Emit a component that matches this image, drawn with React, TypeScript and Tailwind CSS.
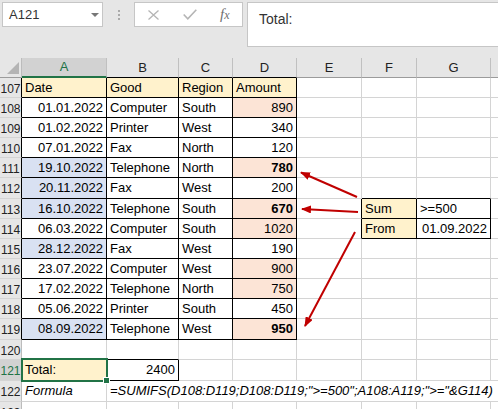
import clsx from 'clsx';

type C = {
  t?: string;
  bg?: string;
  r?: boolean;
  bold?: boolean;
  it?: boolean;
  rb?: boolean;
  bb?: boolean;
  nr?: boolean;
  span?: string;
};

const Y = 'bg-[#fff2cc]';
const O = 'bg-[#fce4d6]';
const BL = 'bg-[#d9e1f2]';

const FORMULA = '=SUMIFS(D108:D119;D108:D119;">=500";A108:A119;">="&G114)';

function dataRow(
  date: string,
  good: string,
  region: string,
  amt: string,
  blue: boolean,
  orange: boolean,
  bold: boolean,
  extra: C[] = [{}, {}, {}, { nr: true }]
): C[] {
  return [
    { t: date, r: true, bg: blue ? BL : undefined, rb: true, bb: true },
    { t: good, rb: true, bb: true },
    { t: region, rb: true, bb: true },
    { t: amt, r: true, bg: orange ? O : undefined, bold, rb: true, bb: true },
    ...extra,
  ];
}

const empty = (): C[] => [{}, {}, {}, {}, {}, {}, {}, { nr: true }];

const rows: { n: number; black?: boolean; sel?: boolean; cells: C[] }[] = [
  {
    n: 107,
    black: true,
    cells: [
      { t: 'Date', bg: Y, rb: true, bb: true },
      { t: 'Good', bg: Y, rb: true, bb: true },
      { t: 'Region', bg: Y, rb: true, bb: true },
      { t: 'Amount', bg: Y, rb: true, bb: true },
      {}, {}, {}, { nr: true },
    ],
  },
  { n: 108, black: true, cells: dataRow('01.01.2022', 'Computer', 'South', '890', false, true, false) },
  { n: 109, black: true, cells: dataRow('01.02.2022', 'Printer', 'West', '340', false, false, false) },
  { n: 110, black: true, cells: dataRow('07.01.2022', 'Fax', 'North', '120', false, false, false) },
  { n: 111, black: true, cells: dataRow('19.10.2022', 'Telephone', 'North', '780', true, true, true) },
  { n: 112, black: true, cells: dataRow('20.11.2022', 'Fax', 'West', '200', true, false, false, [{}, { bb: true }, { bb: true }, { nr: true }]) },
  {
    n: 113,
    black: true,
    cells: dataRow('16.10.2022', 'Telephone', 'South', '670', true, true, true, [
      { rb: true },
      { t: 'Sum', bg: Y, rb: true, bb: true },
      { t: '>=500', rb: true, bb: true },
      { nr: true },
    ]),
  },
  {
    n: 114,
    black: true,
    cells: dataRow('06.03.2022', 'Computer', 'South', '1020', false, true, false, [
      { rb: true },
      { t: 'From', bg: Y, rb: true, bb: true },
      { t: '01.09.2022', r: true, rb: true, bb: true },
      { nr: true },
    ]),
  },
  { n: 115, black: true, cells: dataRow('28.12.2022', 'Fax', 'West', '190', true, false, false) },
  { n: 116, black: true, cells: dataRow('23.07.2022', 'Computer', 'West', '900', false, true, false) },
  { n: 117, black: true, cells: dataRow('17.02.2022', 'Telephone', 'North', '750', false, true, false) },
  { n: 118, black: true, cells: dataRow('05.06.2022', 'Printer', 'South', '450', false, false, false) },
  { n: 119, black: true, cells: dataRow('08.09.2022', 'Telephone', 'West', '950', true, true, true) },
  { n: 120, cells: [{ bb: true }, { bb: true }, {}, {}, {}, {}, {}, { nr: true }] },
  {
    n: 121,
    sel: true,
    cells: [
      { t: 'Total:', bg: Y, rb: true, bb: true },
      { t: '2400', r: true, rb: true, bb: true },
      {}, {}, {}, {}, {}, { nr: true },
    ],
  },
  {
    n: 122,
    cells: [
      { t: 'Formula', it: true },
      { t: FORMULA, it: true, nr: true, span: 'col-span-7 text-[12.75px]' },
    ],
  },
  { n: 123, cells: empty() },
];

function Cell({ c }: { c: C }) {
  return (
    <div
      className={clsx(
        'flex items-center overflow-hidden whitespace-nowrap border-b px-[3px] text-[13px] text-black',
        c.nr ? 'border-r-0' : 'border-r',
        c.rb ? 'border-r-black' : 'border-r-[#d4d4d4]',
        c.bb ? 'border-b-black' : 'border-b-[#d4d4d4]',
        c.r ? 'justify-end' : 'justify-start',
        c.bg ?? 'bg-white',
        c.bold && 'font-bold',
        c.it && 'italic',
        c.span
      )}
    >
      {c.t}
    </div>
  );
}

function RowHead({ n, black, sel }: { n: number; black?: boolean; sel?: boolean }) {
  return (
    <div
      className={clsx(
        'flex items-start justify-center border-r border-b border-b-[#d4d4d4] pt-[2px] text-[12px]',
        black ? 'border-r-black' : 'border-r-[#bcbcbc]',
        sel ? 'bg-[#d2d2d2] text-[#217346]' : 'bg-[#e6e6e6] text-[#222]'
      )}
    >
      {n}
    </div>
  );
}

const letters = ['A', 'B', 'C', 'D', 'E', 'F', 'G'];

function Toolbar() {
  return (
    <div className="flex h-[58px] items-start bg-[#e6e6e6] pl-[2px] pt-[2px]">
      <div className="relative flex h-[25px] w-[101px] items-center border border-[#c6c6c6] bg-white pl-[6px] text-[13px] text-[#333]">
        A121
        <svg className="absolute left-[88px] top-[10px]" width="8" height="5" viewBox="0 0 8 5">
          <path d="M0 0 L8 0 L4 4 Z" fill="#777" />
        </svg>
      </div>
      <div className="flex h-[25px] w-[31px] flex-col items-center justify-center gap-[2px]">
        <span className="h-[2px] w-[2px] bg-[#aaa]" />
        <span className="h-[2px] w-[2px] bg-[#aaa]" />
        <span className="h-[2px] w-[2px] bg-[#aaa]" />
      </div>
      <div className="flex h-[25px] w-[109px] items-center border border-[#c6c6c6] bg-white">
        <svg className="ml-[13px]" width="11" height="10" viewBox="0 0 11 10">
          <path d="M0.5 0.5 L10.5 9.5 M10.5 0.5 L0.5 9.5" stroke="#b5b5b5" strokeWidth="1.3" fill="none" />
        </svg>
        <svg className="ml-[24px]" width="14" height="11" viewBox="0 0 14 11">
          <path d="M0.7 5.5 L4.8 9.8 L13.3 0.8" stroke="#b5b5b5" strokeWidth="1.6" fill="none" />
        </svg>
        <span className="ml-[23px] font-['Liberation_Serif',serif] text-[15px] italic leading-none text-[#707070]">
          f<span className="text-[12px]">x</span>
        </span>
      </div>
      <div className="ml-[4px] h-[45px] flex-1 border border-r-0 border-[#c6c6c6] bg-white pl-[11px] pt-[6px] text-[14px] text-[#333]">
        Total:
      </div>
    </div>
  );
}

export default function App() {
  return (
    <div className="relative h-[409px] w-[498px] overflow-hidden bg-white font-['Liberation_Sans',Arial,sans-serif]">
      <Toolbar />
      <div className="grid grid-cols-[22px_85px_72px_54px_64px_65px_55px_74px_1fr] grid-rows-[20px_20px_20px_20px_20px_20px_21px_20px_20px_20px_20px_20px_20px_21px_20px_21px_21px_20px]">
        <div className="relative border-r border-b border-r-[#bcbcbc] border-b-[#9b9b9b] bg-[#e6e6e6]">
          <svg className="absolute right-[2px] bottom-[3px]" width="12" height="12" viewBox="0 0 12 12">
            <path d="M12 0 L12 12 L0 12 Z" fill="#b4b4b4" />
          </svg>
        </div>
        {letters.map((l, i) => (
          <div
            key={l}
            className={clsx(
              'flex items-center justify-center border-r border-r-[#c0c0c0] text-[13px]',
              i === 0
                ? 'border-b-2 border-b-[#217346] bg-[#d2d2d2] text-[#217346]'
                : i < 4
                  ? 'border-b border-b-black bg-[#e6e6e6] text-[#222]'
                  : 'border-b border-b-[#9b9b9b] bg-[#e6e6e6] text-[#222]'
            )}
          >
            {l}
          </div>
        ))}
        <div className="border-b border-b-[#9b9b9b] bg-[#e6e6e6]" />
        {rows.map((row) => (
          <div key={row.n} className="contents">
            <RowHead n={row.n} black={row.black} sel={row.sel} />
            {row.cells.map((c, i) => (
              <Cell key={i} c={c} />
            ))}
          </div>
        ))}
      </div>

      {/* active cell A121 */}
      <div className="pointer-events-none absolute left-[21px] top-[358px] h-[24px] w-[87px] border-2 border-[#217346]" />
      <div className="pointer-events-none absolute left-[103px] top-[377px] h-[7px] w-[7px] border border-white bg-[#217346]" />

      {/* arrows */}
      <svg className="pointer-events-none absolute inset-0" width="498" height="409" viewBox="0 0 498 409">
        <defs>
          <marker id="ah" markerWidth="10" markerHeight="8" refX="9" refY="4" orient="auto" markerUnits="userSpaceOnUse">
            <path d="M0 0 L10 4 L0 8 Z" fill="#c00000" />
          </marker>
        </defs>
        <g stroke="#c00000" strokeWidth="2" fill="none">
          <line x1="357" y1="197" x2="301" y2="172.5" markerEnd="url(#ah)" />
          <line x1="358" y1="212" x2="302" y2="209" markerEnd="url(#ah)" />
          <line x1="355" y1="232" x2="305" y2="326" markerEnd="url(#ah)" />
        </g>
      </svg>
    </div>
  );
}
